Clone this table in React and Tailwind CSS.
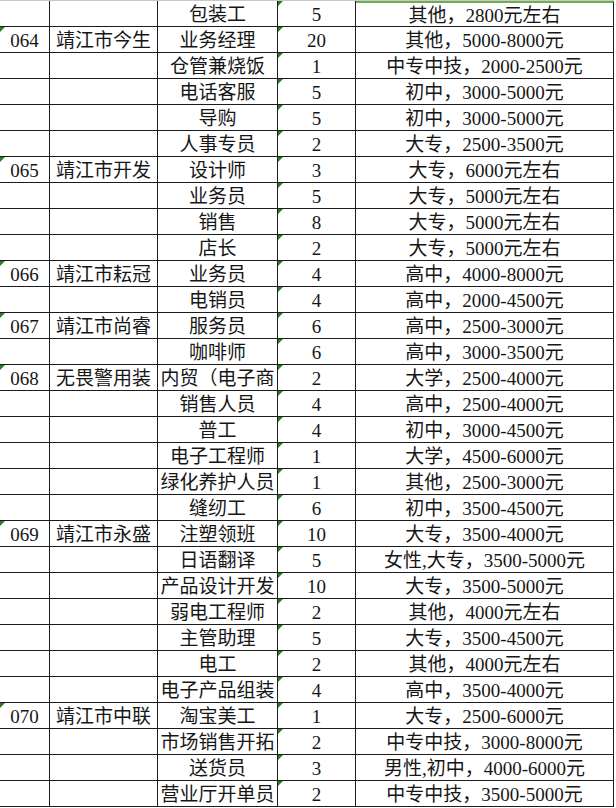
import React from 'react';

const rows = [
  ['', '', '包装工', '5', '其他，2800元左右'],
  ['064', '靖江市今生', '业务经理', '20', '其他，5000-8000元'],
  ['', '', '仓管兼烧饭', '1', '中专中技，2000-2500元'],
  ['', '', '电话客服', '5', '初中，3000-5000元'],
  ['', '', '导购', '5', '初中，3000-5000元'],
  ['', '', '人事专员', '2', '大专，2500-3500元'],
  ['065', '靖江市开发', '设计师', '3', '大专，6000元左右'],
  ['', '', '业务员', '5', '大专，5000元左右'],
  ['', '', '销售', '8', '大专，5000元左右'],
  ['', '', '店长', '2', '大专，5000元左右'],
  ['066', '靖江市耘冠', '业务员', '4', '高中，4000-8000元'],
  ['', '', '电销员', '4', '高中，2000-4500元'],
  ['067', '靖江市尚睿', '服务员', '6', '高中，2500-3000元'],
  ['', '', '咖啡师', '6', '高中，3000-3500元'],
  ['068', '无畏警用装', '内贸（电子商', '2', '大学，2500-4000元'],
  ['', '', '销售人员', '4', '高中，2500-4000元'],
  ['', '', '普工', '4', '初中，3000-4500元'],
  ['', '', '电子工程师', '1', '大学，4500-6000元'],
  ['', '', '绿化养护人员', '1', '其他，2500-3000元'],
  ['', '', '缝纫工', '6', '初中，3500-4500元'],
  ['069', '靖江市永盛', '注塑领班', '10', '大专，3500-4000元'],
  ['', '', '日语翻译', '5', '女性,大专，3500-5000元'],
  ['', '', '产品设计开发', '10', '大专，3500-5000元'],
  ['', '', '弱电工程师', '2', '其他，4000元左右'],
  ['', '', '主管助理', '5', '大专，3500-4500元'],
  ['', '', '电工', '2', '其他，4000元左右'],
  ['', '', '电子产品组装', '4', '高中，3500-4000元'],
  ['070', '靖江市中联', '淘宝美工', '1', '大专，2500-6000元'],
  ['', '', '市场销售开拓', '2', '中专中技，3000-8000元'],
  ['', '', '送货员', '3', '男性,初中，4000-6000元'],
  ['', '', '营业厅开单员', '2', '中专中技，3500-5000元'],
];

function Flag() {
  return (
    <span className="absolute left-0 top-0 w-0 h-0 border-t-[5px] border-r-[5px] border-t-[#2f7a2a] border-r-transparent" />
  );
}

function Cell({ className, flag, children }) {
  return (
    <div className={`relative h-full flex items-center justify-center pt-[2px] overflow-hidden whitespace-nowrap border-r border-[#1c1c1c] ${className}`}>
      {flag && <Flag />}
      {children}
    </div>
  );
}

export default function App() {
  return (
    <div
      className="w-[616px] h-[808px] bg-white overflow-hidden text-[19px] leading-none text-[#161616]"
      style={{ fontFamily: '"Liberation Serif", "Noto Sans CJK SC", serif' }}
    >
      <div className="h-[1px] w-[614px] bg-[#c8c8c8]" />
      {rows.map((r, i) => (
        <div key={i} className="flex w-[614px] h-[26.03px] border-b border-[#1c1c1c]">
          <Cell className="w-[50px]" flag={!!r[0]}>{r[0]}</Cell>
          <Cell className="w-[108px]">{r[1]}</Cell>
          <Cell className="w-[120px]">{r[2]}</Cell>
          <Cell className="w-[78px]" flag>{r[3]}</Cell>
          <Cell className={`w-[258px] ${i === 0 ? 'border-t-2 border-t-[#6fae4f]' : ''}`}>{r[4]}</Cell>
        </div>
      ))}
    </div>
  );
}
